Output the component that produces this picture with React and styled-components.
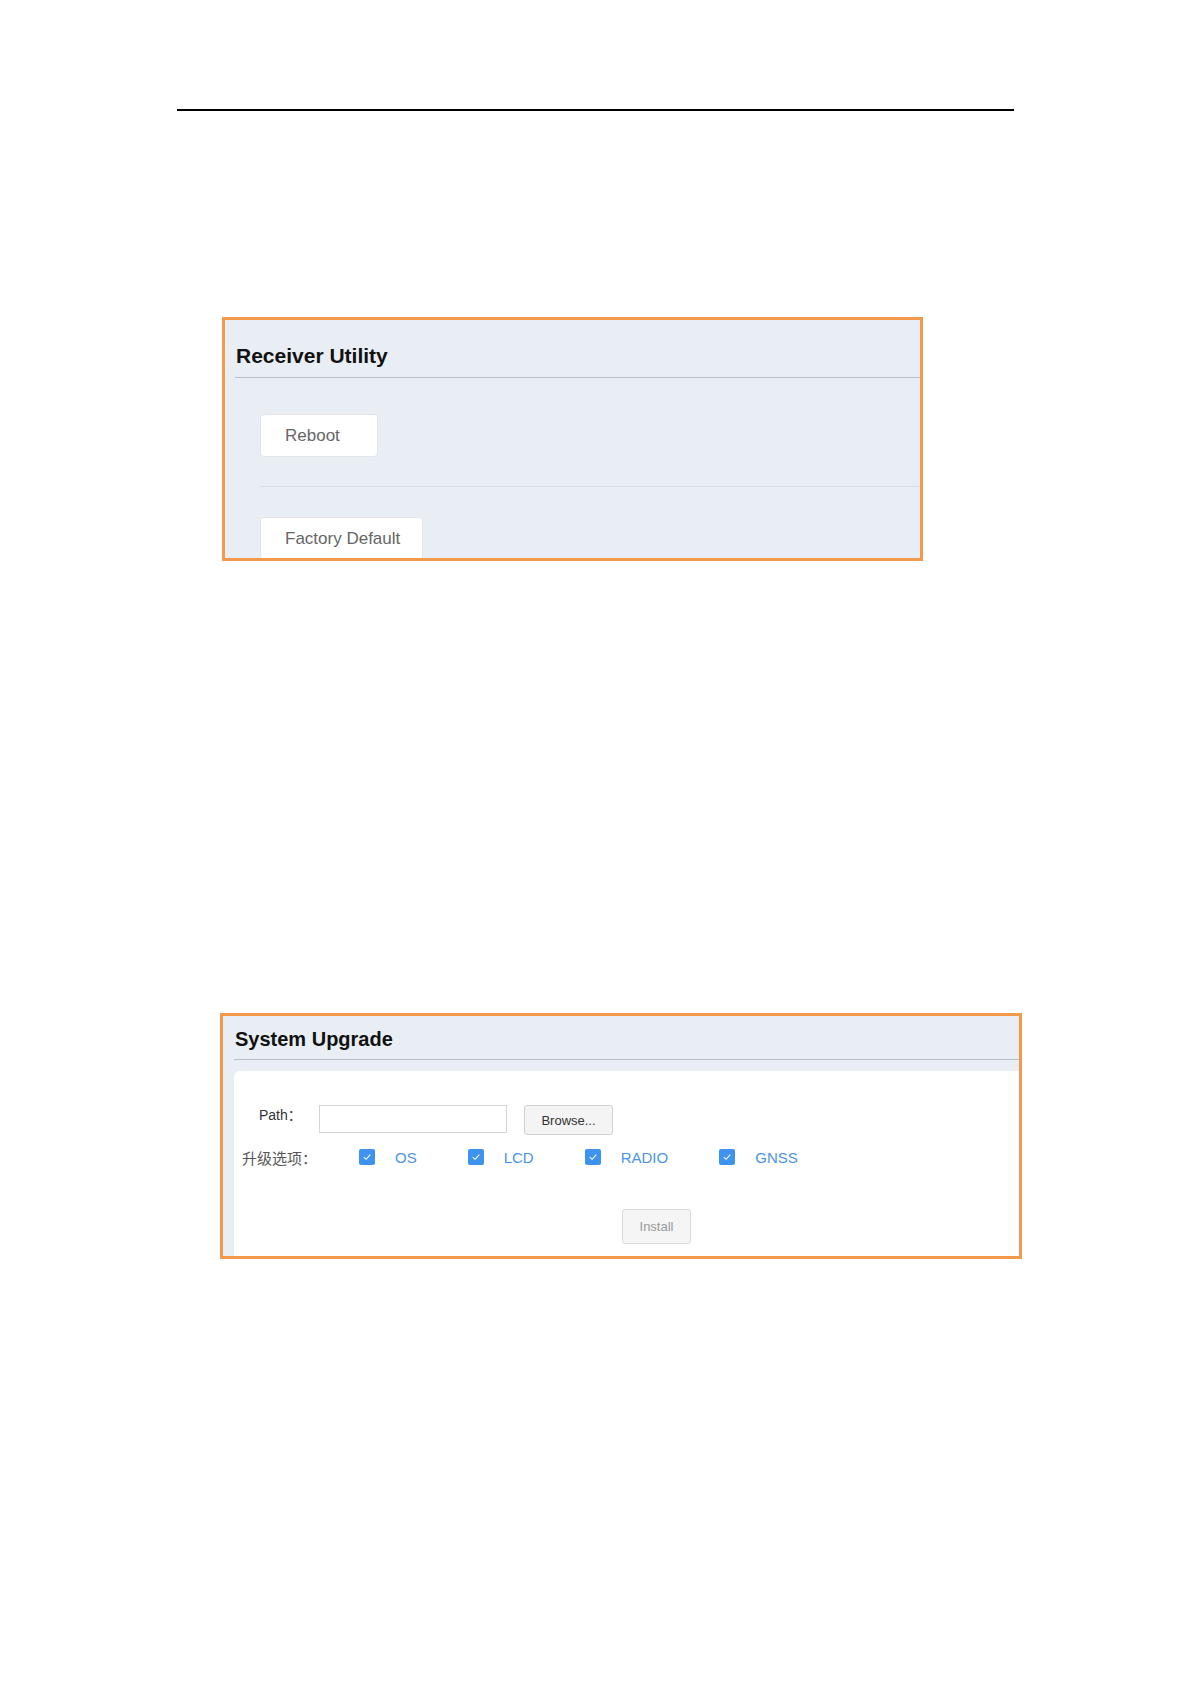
import React from "react";
import styled, { createGlobalStyle } from "styled-components";

const Global = createGlobalStyle`
  html, body { margin: 0; padding: 0; background: #ffffff; }
  body { font-family: "Liberation Sans", Arial, "Noto Sans CJK SC", sans-serif; }
  * { box-sizing: border-box; }
`;

const Page = styled.div`
  width: 1191px;
  min-height: 1684px;
  padding-top: 109px;
  display: flex;
  flex-direction: column;
`;

const TopRule = styled.div`
  margin-left: 177px;
  width: 837px;
  height: 2px;
  background: #000;
`;

const Frame = styled.section`
  margin-top: ${(p) => p.$top}px;
  margin-left: ${(p) => p.$left}px;
  width: ${(p) => p.$w}px;
  height: ${(p) => p.$h}px;
  border: 3px solid #f29a4c;
  background: #e9eef4;
  overflow: hidden;
  display: flex;
  flex-direction: column;
`;

const Header = styled.div`
  margin-left: ${(p) => p.$indent}px;
  padding-top: ${(p) => p.$pt}px;
  padding-left: 1px;
  padding-bottom: ${(p) => p.$pb}px;
  border-bottom: 1px solid #b9bfc7;
`;

const Title = styled.h2`
  margin: 0;
  font-family: "Liberation Sans", Arial, sans-serif;
  font-weight: bold;
  font-size: ${(p) => p.$size}px;
  line-height: 24px;
  color: #111;
`;

const UtilityBody = styled.div`
  padding-left: 35px;
  padding-top: 36px;
  display: flex;
  flex-direction: column;
`;

const UtilButton = styled.button`
  align-self: flex-start;
  width: ${(p) => p.$w}px;
  height: 43px;
  padding: 0 0 0 24px;
  text-align: left;
  background: #ffffff;
  border: 1px solid #e2e6eb;
  border-radius: 4px;
  font-family: "Liberation Sans", Arial, sans-serif;
  font-size: 17px;
  color: #666;
  flex-shrink: 0;
`;

const Divider = styled.div`
  height: 1px;
  background: #d9dee5;
  margin: 29px 0 30px;
`;

const WhitePanel = styled.div`
  margin-top: 11px;
  margin-left: 11px;
  flex: 1;
  background: #ffffff;
  border-top-left-radius: 6px;
  padding-top: 34px;
  display: flex;
  flex-direction: column;
`;

const PathRow = styled.div`
  display: flex;
  align-items: center;
  height: 30px;
  padding-left: 25px;
`;

const PathLabel = styled.span`
  width: 60px;
  font-size: 14px;
  line-height: 16px;
  color: #333;
  margin-top: -10px;
`;

const PathInput = styled.input`
  width: 188px;
  height: 28px;
  margin-top: -2px;
  border: 1px solid #d4d4d4;
  background: #fff;
  padding: 0 4px;
  outline: none;
`;

const BrowseButton = styled.button`
  margin-left: 17px;
  width: 89px;
  height: 30px;
  background: #f4f4f4;
  border: 1px solid #d2d2d2;
  border-radius: 3px;
  font-family: "Liberation Sans", Arial, sans-serif;
  font-size: 13px;
  color: #333;
  padding: 0;
`;

const OptionRow = styled.div`
  display: flex;
  align-items: center;
  height: 20px;
  margin-top: 12px;
  padding-left: 8px;
`;

const OptionLabel = styled.span`
  width: 117px;
  font-family: "Noto Sans CJK SC", "Liberation Sans", sans-serif;
  font-size: 15px;
  color: #555;
`;

const Options = styled.div`
  display: flex;
  align-items: center;
  gap: 51px;
`;

const Option = styled.label`
  display: flex;
  align-items: center;
  gap: 20px;
`;

const Box = styled.span`
  width: 16px;
  height: 16px;
  border-radius: 2px;
  background: #3d93ef;
  display: flex;
  align-items: center;
  justify-content: center;
`;

const OptionText = styled.span`
  font-family: "Liberation Sans", Arial, sans-serif;
  font-size: 15px;
  color: #4a94e8;
`;

const InstallButton = styled.button`
  margin-top: 42px;
  margin-left: 388px;
  width: 69px;
  height: 35px;
  background: #f5f5f5;
  border: 1px solid #dadada;
  border-radius: 3px;
  font-family: "Liberation Sans", Arial, sans-serif;
  font-size: 13px;
  color: #9a9a9a;
  padding: 0;
`;

const Check = () => (
  <svg width="10" height="10" viewBox="0 0 10 10">
    <path d="M1.8 5.2 L4.1 7.3 L8.3 2.6" fill="none" stroke="#fff" strokeWidth="1.1" />
  </svg>
);

const options = ["OS", "LCD", "RADIO", "GNSS"];

export default function App() {
  return (
    <Page>
      <Global />
      <TopRule />
      <Frame $top={206} $left={222} $w={701} $h={244}>
        <Header $indent={10} $pt={24} $pb={9}>
          <Title $size={21}>Receiver Utility</Title>
        </Header>
        <UtilityBody>
          <UtilButton $w={118}>Reboot</UtilButton>
          <Divider />
          <UtilButton $w={163}>Factory Default</UtilButton>
        </UtilityBody>
      </Frame>
      <Frame $top={452} $left={220} $w={802} $h={246}>
        <Header $indent={11} $pt={11} $pb={8}>
          <Title $size={20}>System Upgrade</Title>
        </Header>
        <WhitePanel>
          <PathRow>
            <PathLabel>Path：</PathLabel>
            <PathInput type="text" />
            <BrowseButton>Browse...</BrowseButton>
          </PathRow>
          <OptionRow>
            <OptionLabel>升级选项：</OptionLabel>
            <Options>
              {options.map((o) => (
                <Option key={o}>
                  <Box>
                    <Check />
                  </Box>
                  <OptionText>{o}</OptionText>
                </Option>
              ))}
            </Options>
          </OptionRow>
          <InstallButton>Install</InstallButton>
        </WhitePanel>
      </Frame>
    </Page>
  );
}
